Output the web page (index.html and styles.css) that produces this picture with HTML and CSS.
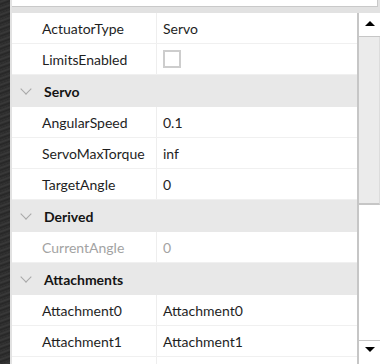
FILE: index.html
```html
<!DOCTYPE html>
<html lang="en">
<head>
    <meta charset="UTF-8">
    <meta name="viewport" content="width=device-width, initial-scale=1.0">
    <title>Properties</title>
    <link rel="stylesheet" href="styles.css">
</head>
<body>
    <!-- Koyu kenar -->
    <div class="edge"></div>

    <div class="pane">
        <!-- Arama kutusu (kesik) -->
        <div class="search"></div>

        <div class="panel">
            <div class="list">
                <div class="row"><span class="name">ActuatorType</span><span class="value">Servo</span></div>
                <div class="row"><span class="name">LimitsEnabled</span><span class="value"><span class="checkbox"></span></span></div>

                <div class="group"><span class="chevron"></span><span class="title">Servo</span></div>
                <div class="row"><span class="name">AngularSpeed</span><span class="value">0.1</span></div>
                <div class="row"><span class="name">ServoMaxTorque</span><span class="value">inf</span></div>
                <div class="row"><span class="name">TargetAngle</span><span class="value">0</span></div>

                <div class="group"><span class="chevron"></span><span class="title">Derived</span></div>
                <div class="row readonly"><span class="name">CurrentAngle</span><span class="value">0</span></div>

                <div class="group"><span class="chevron"></span><span class="title">Attachments</span></div>
                <div class="row"><span class="name">Attachment0</span><span class="value">Attachment0</span></div>
                <div class="row"><span class="name">Attachment1</span><span class="value">Attachment1</span></div>
                <div class="row"><span class="name"></span><span class="value"></span></div>
            </div>

            <!-- Kaydırma çubuğu -->
            <div class="scrollbar">
                <div class="arrow up"></div>
                <div class="thumb"></div>
                <div class="track"></div>
                <div class="arrow down"></div>
            </div>
        </div>
    </div>
</body>
</html>
```

FILE: styles.css
```css
/* Genel */
body {
    margin: 0;
    height: 364px;
    overflow: hidden;
    display: flex;
    font-family: Lato, "Open Sans", sans-serif;
    font-size: 14px;
    color: #1e1e1e;
    background: #e2e2e2;
}

.edge {
    width: 10px;
    flex: none;
    background: repeating-linear-gradient(160deg, #2b2b2b 0, #3a3a3a 2px, #262626 4px, #333 6px);
}

.pane {
    flex: 1;
    display: flex;
    flex-direction: column;
    padding-left: 2px;
    min-width: 0;
}

/* Üst kutu */
.search {
    height: 6px;
    background: #fff;
    border-bottom: 1px solid #c9c9c9;
    border-right: 1px solid #c9c9c9;
    margin-right: 2px;
    flex: none;
}

.panel {
    margin-top: 6px;
    flex: 1;
    display: flex;
    background: #fff;
    min-height: 0;
}

.list {
    flex: 1;
    overflow: hidden;
}

/* Satırlar */
.row {
    height: 30px;
    display: flex;
    align-items: center;
    border-bottom: 1px solid #f0f0f0;
}

.row .name {
    width: 114px;
    height: 100%;
    padding-left: 30px;
    display: flex;
    align-items: center;
    border-right: 1px solid #eeeeee;
    flex: none;
}

.row .value {
    padding-left: 6px;
    display: flex;
    align-items: center;
}

.readonly {
    color: #a3a3a3;
}

.checkbox {
    width: 14px;
    height: 14px;
    border: 2px solid #cdcdcd;
    background: #fff;
}

/* Gruplar */
.group {
    height: 32px;
    display: flex;
    align-items: center;
    background: #e8e8e8;
    font-weight: bold;
}

.chevron {
    width: 7px;
    height: 7px;
    margin-left: 10px;
    margin-right: 14px;
    margin-top: -5px;
    border-right: 1px solid #a8a8a8;
    border-bottom: 1px solid #a8a8a8;
    transform: rotate(45deg);
}

.title {
    color: #141414;
}

/* Kaydırma çubuğu */
.scrollbar {
    width: 21px;
    flex: none;
    display: flex;
    flex-direction: column;
    border-left: 2px solid #c6c6c6;
    background: #fff;
}

.arrow {
    height: 23px;
    display: flex;
    align-items: center;
    justify-content: center;
    background: #fff;
    flex: none;
}

.arrow.up {
    border-bottom: 1px solid #c6c6c6;
}

.arrow.down {
    border-top: 1px solid #c6c6c6;
}

.arrow::after {
    content: "";
    border-left: 5px solid transparent;
    border-right: 5px solid transparent;
}

.arrow.up::after {
    border-bottom: 5px solid #000;
    margin-bottom: 2px;
}

.arrow.down::after {
    border-top: 5px solid #000;
    margin-bottom: 6px;
}

.thumb {
    height: 166px;
    background: #ebebeb;
    border-bottom: 2px solid #c6c6c6;
    border-right: 1px solid #dcdcdc;
    flex: none;
}

.track {
    flex: 1;
}
```
